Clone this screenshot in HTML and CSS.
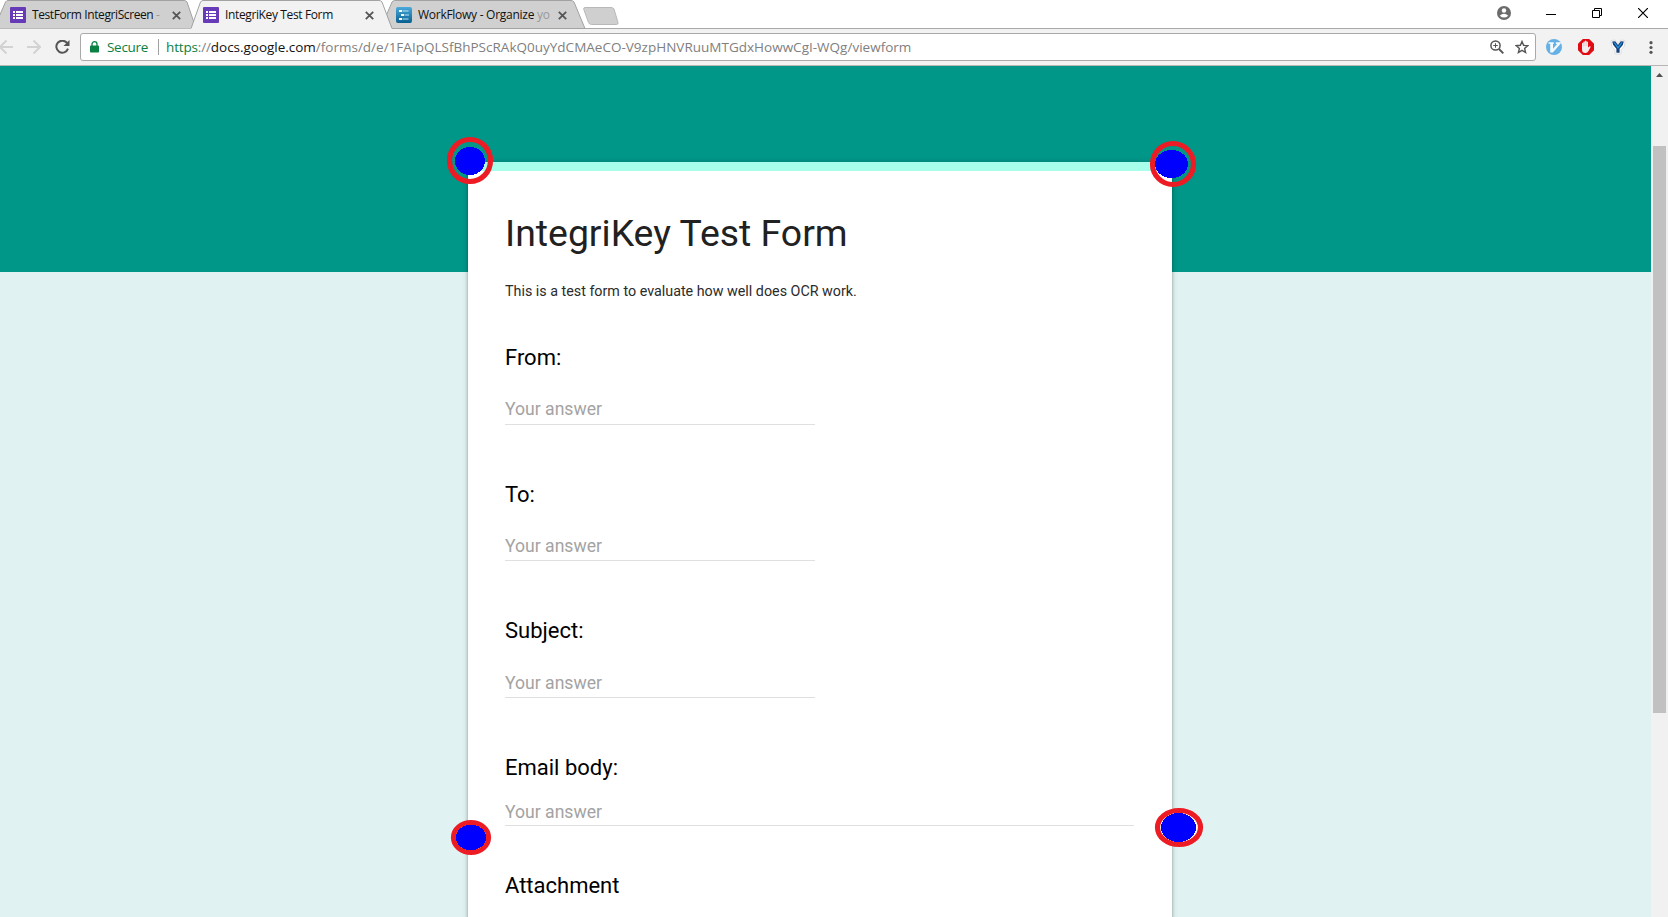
FILE: index.html
```html
<!DOCTYPE html>
<html lang="en">
<head>
<meta charset="utf-8">
<title>IntegriKey Test Form</title>
<link rel="stylesheet" href="styles.css">
</head>
<body>
<header class="tabstrip">
  <div class="tab tab-first">
    <svg class="shape" width="202" height="29" viewBox="0 0 202 29"><path d="M0 28.500L11.500 2Q12.500 .5 14 .5H190Q192 .5 193 2L202 28.500" fill="#d0d0d0" stroke="#a2a2a2"/></svg>
    <svg class="fav" viewBox="0 0 16 16"><rect width="16" height="16" rx="1" fill="#673ab7"/><path d="M3 4h2v2H3zM6 4h7v2H6zM3 7h2v2H3zM6 7h7v2H6zM3 10h2v2H3zM6 10h7v2H6z" fill="#fff"/></svg>
    <span class="name t1">TestForm IntegriScreen <i>-</i></span>
    <svg class="close" viewBox="0 0 9 9"><path d="M.8.8l7.400 7.400M8.200.8L.8 8.200"/></svg>
  </div>
  <div class="tab tab-active">
    <svg class="shape" width="202" height="29" viewBox="0 0 202 29"><path d="M0 28.500L9.500 2Q10.500 .5 12 .5H188Q190 .5 191 2L201 28.500V29H0z" fill="#f2f2f2"/><path d="M0 28.500L9.500 2Q10.500 .5 12 .5H188Q190 .5 191 2L201 28.500" fill="none" stroke="#a2a2a2"/></svg>
    <svg class="fav" viewBox="0 0 16 16"><rect width="16" height="16" rx="1" fill="#673ab7"/><path d="M3 4h2v2H3zM6 4h7v2H6zM3 7h2v2H3zM6 7h7v2H6zM3 10h2v2H3zM6 10h7v2H6z" fill="#fff"/></svg>
    <span class="name t2">IntegriKey Test Form</span>
    <svg class="close" viewBox="0 0 9 9"><path d="M.8.8l7.400 7.400M8.200.8L.8 8.200"/></svg>
  </div>
  <div class="tab tab-last">
    <svg class="shape" width="202" height="29" viewBox="0 0 202 29"><path d="M8 28.500L2.500 15L8 2Q9 .5 10.500 .5H187Q189 .5 190 2L201 28.500z" fill="#d0d0d0" stroke="#a2a2a2"/></svg>
    <svg class="fav" viewBox="0 0 16 16"><defs><linearGradient id="wf" x2="0" y2="1"><stop stop-color="#49aadb"/><stop offset="1" stop-color="#075f91"/></linearGradient></defs><rect width="16" height="16" rx="2" fill="url(#wf)"/><path d="M3 4h3M5 8h3M3 12h3" stroke="#f4fbff" stroke-width="2" fill="none"/><path d="M6.500 4h6M8.500 8h4.500M6.500 12h6" stroke="#bfe3f3" stroke-width="1.200" fill="none"/></svg>
    <span class="name t3">WorkFlowy - Organize <i>yo</i></span>
    <svg class="close" viewBox="0 0 9 9"><path d="M.8.8l7.400 7.400M8.200.8L.8 8.200"/></svg>
  </div>
  <svg class="newtab" width="36" height="19" viewBox="0 0 36 19"><path d="M2 .5H28Q30 .5 31 2L35 15.500Q35.500 17.500 33.500 17.500H8.500Q6.500 17.500 5.500 15.500L.8 2.500Q.3 .5 2 .5z" fill="#cfcfcf" stroke="#b8b8b8"/></svg>
  <div class="winctl">
    <svg width="14" height="14" viewBox="0 0 14 14"><circle cx="7" cy="7" r="7" fill="#6b6b6b"/><circle cx="7" cy="4.500" r="2.200" fill="#fff"/><path d="M2.700 9.700Q7 5.700 11.300 9.700Q7 13.500 2.700 9.700z" fill="#fff"/></svg>
    <svg width="10" height="10" viewBox="0 0 10 10"><path d="M0 5.500h10" stroke="#000"/></svg>
    <svg width="10" height="10" viewBox="0 0 10 10"><path d="M.5 2.500h7v7h-7zM2.500 2.500v-2h7v7h-2" fill="none" stroke="#000"/></svg>
    <svg width="10" height="10" viewBox="0 0 10 10"><path d="M0 0l10 10M10 0L0 10" stroke="#000" stroke-width="1.200"/></svg>
  </div>
</header>
<nav class="toolbar">
  <svg class="back" width="14" height="14" viewBox="0 0 14 14"><path d="M14 7H1M7.500 .5L1 7l6.500 6.500" class="dim"/></svg>
  <svg class="fwd" width="14" height="14" viewBox="0 0 14 14"><path d="M0 7h13M6.500 .5L13 7l-6.500 6.500" class="dim"/></svg>
  <svg class="reload" width="15" height="14" viewBox="0 0 15 14"><path d="M12.300 3.300A6 6 0 1 0 13 8.700" fill="none" stroke="#555" stroke-width="2"/><path d="M14.500 0v6h-6z" fill="#555"/></svg>
  <div class="omnibox">
    <svg class="lock" width="9" height="12" viewBox="0 0 9 12"><rect y="4.500" width="9" height="7" rx=".8" fill="#0b8043"/><path d="M2 5V3a2.500 2.300 0 0 1 5 0v2" fill="none" stroke="#0b8043" stroke-width="1.300"/></svg>
    <span class="secure">Secure</span>
    <span class="sep"></span>
    <span class="url"><span class="https">https</span>://<b>docs.google.com</b><span class="path">/forms/d/e/1FAIpQLSfBhPScRAkQ0uyYdCMAeCO-V9zpHNVRuuMTGdxHowwCgI-WQg/viewform</span></span>
    <svg class="mag" width="14" height="14" viewBox="0 0 14 14"><circle cx="5.500" cy="5.500" r="4.600" fill="none" stroke="#555" stroke-width="1.500"/><path d="M9 9l4.300 4.300" stroke="#555" stroke-width="1.900"/><path d="M3.200 5.500h4.600M5.500 3.200v4.600" stroke="#555" stroke-width="1"/></svg>
    <svg width="14" height="14" viewBox="0 0 14 14"><path d="M7 1.500l1.600 3.800 4.200.4-3.200 2.700 1 4.100L7 10.300l-3.600 2.200 1-4.100L1.200 5.700l4.200-.4z" fill="none" stroke="#555" stroke-width="1.400"/></svg>
  </div>
  <div class="ext">
    <svg width="16" height="16" viewBox="0 0 16 16"><circle cx="8" cy="8" r="8" fill="#65b1e6"/><path d="M2.500 3.300h5.300v1.500l-.8.300v4.600L11 5.200 9.800 4.700V3.300h5v1.200L6.800 13.500H4.200V5.100l-1.700-.5z" fill="#f2fafe"/></svg>
    <svg width="16" height="16" viewBox="0 0 16 16"><path d="M4.800 0h6.400L16 4.800v6.400L11.200 16H4.800L0 11.200V4.800z" fill="#e30b13"/><path d="M4 9V4.300q.7-.9 1.300 0V3q.8-1 1.500 0V2q.8-1 1.600 0v.8q.9-.9 1.600.2v5.600l1.600-1.300q1.200-.1 1 .8l-2.100 4q-1 2-3.100 2Q4 14.100 4 10.500z" fill="#f3eeee"/><path d="M5.400 4v3.500M6.900 3v4M8.400 3v4" stroke="#e9a9a9" stroke-width=".4"/></svg>
    <svg width="16" height="16" viewBox="0 0 16 16"><path d="M1 1.500l4-.5 3 4L11 1l4 .5-.5 5.500L11 11v4H5v-4L1.500 7z" fill="#fff" stroke="#d7d7d7" stroke-width=".8"/><path d="M2.200 2.500l3-.3L8 6l2.800-3.800 3 .3-1 3.500L9.600 9.800v3.900H6.400V9.800L3.200 6z" fill="#17427a"/><path d="M3.500 3.300l1.300.2L8 7.700l3.200-4.200 1.300-.2-2 3.200L8 9.700z" fill="#2897e8"/></svg>
  </div>
  <svg class="dots" width="4" height="13" viewBox="0 0 4 13"><circle cx="2" cy="1.700" r="1.600"/><circle cx="2" cy="6.500" r="1.600"/><circle cx="2" cy="11.300" r="1.600"/></svg>
</nav>
<div class="viewport">
  <main class="page">
    <section class="card">
      <h1>IntegriKey Test Form</h1>
      <p class="desc">This is a test form to evaluate how well does OCR work.</p>
      <div class="q"><label>From:</label><div class="answer">Your answer</div></div>
      <div class="q q-to"><label>To:</label><div class="answer">Your answer</div></div>
      <div class="q q-subject"><label>Subject:</label><div class="answer">Your answer</div></div>
      <div class="q q-long"><label>Email body:</label><div class="answer">Your answer</div></div>
      <div class="q"><label>Attachment</label></div>
    </section>
    <svg class="markers" width="1651" height="851" viewBox="0 66 1651 851">
      <path d="M468 171h17q-3 8-15 9h-2z" fill="#fff"/>
      <g fill="none" stroke="#ed1c24" stroke-width="5.200">
        <ellipse cx="470" cy="160.500" rx="20.500" ry="21"/>
        <ellipse cx="1173" cy="164" rx="20.500" ry="20.500"/>
        <ellipse cx="471" cy="837.500" rx="17.500" ry="15"/>
        <ellipse cx="1179" cy="827.500" rx="21.500" ry="17" fill="#fff"/>
      </g>
      <g fill="#00f" shape-rendering="crispEdges">
        <ellipse cx="470" cy="161" rx="15" ry="14"/>
        <ellipse cx="1171.500" cy="164" rx="16.500" ry="14"/>
        <ellipse cx="471" cy="837.500" rx="15.200" ry="12.700"/>
        <ellipse cx="1178.500" cy="827.500" rx="17.500" ry="14.500"/>
      </g>
    </svg>
  </main>
  <aside class="scroll"><svg width="7" height="4" viewBox="0 0 7 4"><path d="M0 4L3.500 0 7 4z" fill="#505050"/></svg><div class="thumb"></div></aside>
</div>
</body>
</html>
```

FILE: styles.css
```css
* { box-sizing: border-box; }
body { margin: 0; width: 1668px; height: 917px; overflow: hidden; display: flex; flex-direction: column; background: #fff; font-family: "Open Sans", sans-serif; }
svg { display: block; flex: none; }
.tabstrip { display: flex; height: 29px; border-bottom: 1px solid #a9a9a9; flex: none; }
.tab { position: relative; display: flex; align-items: center; width: 193px; height: 29px; padding: 1px 0 0 10px; flex: none; font-size: 12px; color: #111; }
.tab-active { z-index: 2; }
.shape { position: absolute; top: 0; left: -6px; }
.tab-active .shape { left: -2px; }
.tab-last .shape { left: -2px; }
.fav { width: 16px; height: 16px; position: relative; }
.name { position: relative; width: 132px; margin-left: 6px; white-space: nowrap; overflow: hidden; line-height: 18px; }
.name i { font-style: normal; color: #999; }
.t1 { letter-spacing: -.4px; }
.t2 { letter-spacing: -.37px; }
.t3 { letter-spacing: -.27px; }
.close { position: relative; width: 9px; height: 9px; margin-left: 8px; fill: none; stroke: #555; stroke-width: 1.8; }
.newtab { margin: 7px 0 0 4px; }
.winctl { display: flex; align-items: center; gap: 36px; margin-left: auto; padding: 0 20px 2px 0; }
.winctl svg:nth-child(1) { margin-right: -1px; }
.winctl svg:nth-child(2) { margin: 1px 0 0 0; }
.toolbar { display: flex; align-items: center; height: 37px; background: #f2f2f2; border-bottom: 1px solid #b6b6b6; flex: none; }
.dim { fill: none; stroke: #d2d2d2; stroke-width: 2; }
.back { margin-left: -1px; }
.fwd { margin-left: 14px; }
.reload { margin-left: 14px; }
.omnibox { display: flex; align-items: center; width: 1456px; height: 28px; margin-left: 10px; padding: 0 6px 0 9px; background: #fff; border: 1px solid #a9a9a9; border-radius: 3px; font-size: 13.500px; line-height: 20px; color: #808080; white-space: nowrap; }
.secure { width: 43px; margin-left: 8px; color: #0b8043; letter-spacing: -.3px; }
.sep { width: 1px; height: 16px; margin: 0 7px 0 8px; background: #a0a0a0; }
.url { letter-spacing: -.15px; }
.https { color: #0b8043; }
.url b { font-weight: 400; color: #111; letter-spacing: -.03px; }
.path { letter-spacing: .01px; }
.mag { margin: 0 11px 0 auto; }
.ext { display: flex; gap: 16px; margin-left: 10px; }
.dots { margin: 0 15.500px 0 auto; fill: #555; }
.viewport { display: flex; height: 851px; flex: none; }
.page { position: relative; width: 1651px; height: 851px; overflow: hidden; padding: 96px 0 0 468px; background: linear-gradient(#009688 206px, #e0f2f1 206px); flex: none; font-family: Roboto, sans-serif; }
.card { width: 704px; height: 800px; padding: 37px 37px 0; background: #fff; border-top: 9px solid #a7ffeb; box-shadow: 0 2px 2px rgba(0,0,0,.14), 0 3px 1px -2px rgba(0,0,0,.2), 0 1px 5px rgba(0,0,0,.3); }
h1 { margin: 0; font-size: 37.400px; line-height: 50px; font-weight: 400; color: #212121; white-space: nowrap; }
.desc { margin: 22px 0 40.500px; font-size: 14.300px; line-height: 22px; color: #2b2b2b; white-space: nowrap; }
.q { height: 137px; }
.q label { display: block; font-size: 22px; line-height: 30px; color: #000; }
.answer { width: 310px; height: 29px; margin-top: 23.500px; border-bottom: 1px solid #e0e0e0; font-size: 17.600px; line-height: 26px; color: #a3a3a3; }
.q-to { height: 136px; }
.q-to .answer { height: 28px; }
.q-subject .answer { height: 28px; margin-top: 24.500px; }
.q-long { height: 118px; }
.q-long .answer { width: 629px; height: 27px; margin-top: 16.500px; }
.markers { position: absolute; left: 0; top: 0; }
.scroll { width: 17px; height: 851px; padding: 7px 2px 0 2px; background: #f1f1f1; }
.scroll svg { margin-left: 3px; }
.thumb { width: 13px; height: 567px; margin-top: 69px; background: #c1c1c1; }
```
